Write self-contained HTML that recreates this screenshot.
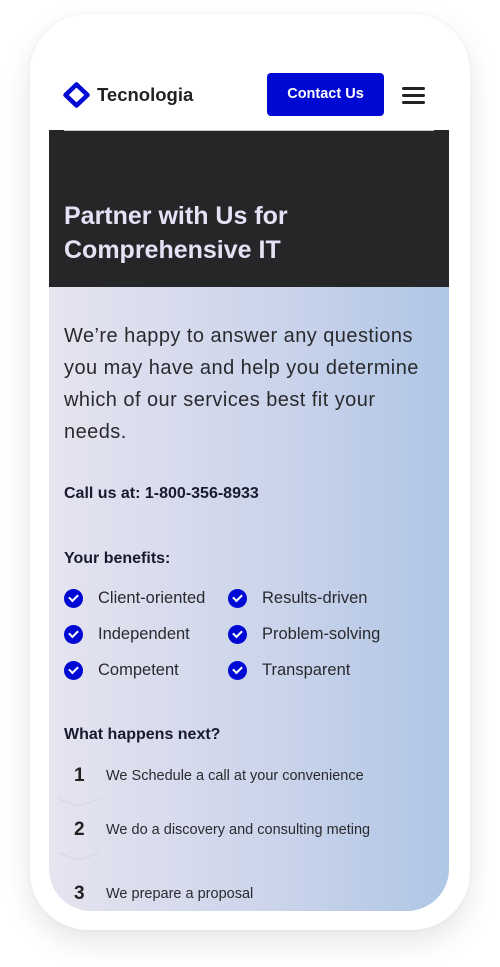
<!DOCTYPE html>
<html><head><style>
*{margin:0;padding:0;box-sizing:border-box}
body{width:500px;height:967px;background:#fff;position:relative;overflow:hidden;font-family:"Liberation Sans",sans-serif}
.phone{position:absolute;left:30px;top:14px;width:440px;height:916px;background:#fff;border-radius:58px;box-shadow:0 12px 30px rgba(0,0,0,.10),0 0 4px rgba(0,0,0,.05)}
.screen{position:absolute;left:49px;top:130px;width:400px;height:781px;border-radius:0 0 42px 42px;overflow:hidden;background:linear-gradient(90deg,#e6e4f0 0%,#c9d3ea 60%,#afc6e6 100%)}
.hero{height:157px;background:#252628;color:#e4e3f6;font-weight:bold;font-size:25px;line-height:34px;padding:69px 15px 0}
.abs{position:absolute}
.t{color:#2a2a2e}
.chk{position:absolute;width:19px;height:19px;border-radius:50%;background:#0008d4}
.chk:after{content:"";position:absolute;left:5px;top:5px;width:7px;height:4px;border-left:2px solid #fff;border-bottom:2px solid #fff;transform:rotate(-45deg)}
.b{position:absolute;font-size:16.5px;color:#2a2a2e}
.n{position:absolute;font-size:19px;font-weight:bold;color:#222;left:25px}
.s{position:absolute;font-size:14.5px;color:#2a2a2e;left:57px}
</style></head><body>
<div class="phone"></div>
<svg class="abs" style="left:63px;top:82px" width="27" height="26" viewBox="0 0 27 26"><path d="M13.5 2.5 L24.5 13 L13.5 23.5 L2.5 13Z" fill="none" stroke="#0008d4" stroke-width="4.5" stroke-linejoin="round"/><path d="M3 6 L9 0" stroke="#fff" stroke-width="2"/><path d="M24 20 L18 26" stroke="#fff" stroke-width="2"/></svg>
<div class="abs" style="left:97px;top:84px;font-size:18.5px;font-weight:bold;color:#222">Tecnologia</div>
<div class="abs" style="left:267px;top:73px;width:117px;height:43px;background:#0008d4;border-radius:4px;color:#fff;font-size:14.5px;font-weight:bold;text-align:center;line-height:43px">Contact Us</div>
<div class="abs" style="left:402px;top:87px;width:23px;height:3px;background:#222;border-radius:2px"></div>
<div class="abs" style="left:402px;top:94px;width:23px;height:3px;background:#222;border-radius:2px"></div>
<div class="abs" style="left:402px;top:101px;width:23px;height:3px;background:#222;border-radius:2px"></div>
<div class="screen">
<div class="hero">Partner with Us for<br>Comprehensive IT</div>
<div class="abs t" style="left:15px;top:190px;width:380px;font-size:20px;line-height:32px;letter-spacing:0.45px">We’re happy to answer any questions<br>you may have and help you determine<br>which of our services best fit your<br>needs.</div>
<div class="abs" style="left:15px;top:355px;font-size:16px;font-weight:bold;color:#1a1a2e">Call us at: 1-800-356-8933</div>
<div class="abs" style="left:15px;top:420px;font-size:16px;font-weight:bold;color:#1a1a2e">Your benefits:</div>
<div class="chk" style="left:15px;top:459px"></div><div class="b" style="left:49px;top:459px">Client-oriented</div>
<div class="chk" style="left:179px;top:459px"></div><div class="b" style="left:213px;top:459px">Results-driven</div>
<div class="chk" style="left:15px;top:495px"></div><div class="b" style="left:49px;top:495px">Independent</div>
<div class="chk" style="left:179px;top:495px"></div><div class="b" style="left:213px;top:495px">Problem-solving</div>
<div class="chk" style="left:15px;top:531px"></div><div class="b" style="left:49px;top:531px">Competent</div>
<div class="chk" style="left:179px;top:531px"></div><div class="b" style="left:213px;top:531px">Transparent</div>
<div class="abs" style="left:15px;top:596px;font-size:16px;font-weight:bold;color:#1a1a2e">What happens next?</div>
<div class="n" style="top:635px">1</div><div class="s" style="top:638px">We Schedule a call at your convenience</div>
<svg class="abs" style="left:9px;top:668px" width="44" height="10"><path d="M0 1 L20 8 L42 1" fill="none" stroke="#d6d6e0"/></svg>
<div class="n" style="top:689px">2</div><div class="s" style="top:692px">We do a discovery and consulting meting</div>
<svg class="abs" style="left:9px;top:722px" width="44" height="10"><path d="M0 1 L20 8 L42 1" fill="none" stroke="#d6d6e0"/></svg>
<div class="n" style="top:753px">3</div><div class="s" style="top:756px">We prepare a proposal</div>
</div>
<div class="abs" style="left:64px;top:130px;width:370px;height:1px;background:#ccc"></div>
</body></html>
